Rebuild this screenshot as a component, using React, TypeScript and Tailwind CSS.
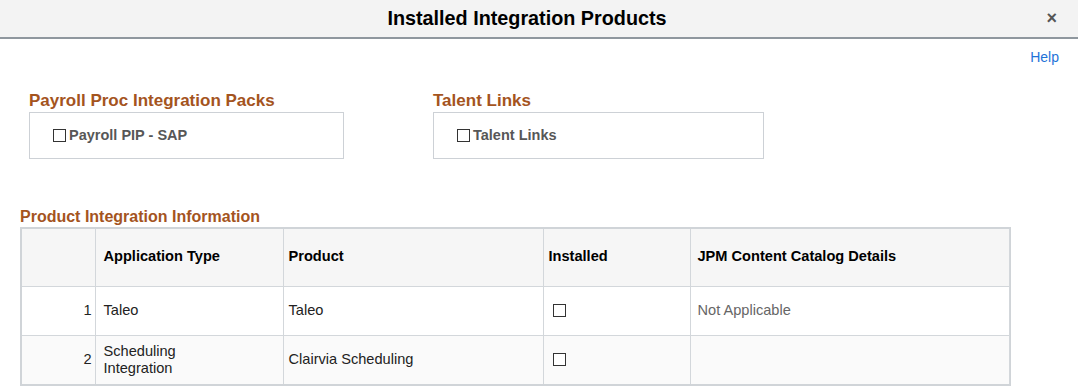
import React from "react";

const Box = () => (
  <span className="inline-block w-[13px] h-[13px] border border-[#333] bg-white shrink-0" />
);

const rows = [
  { n: 1, type: "Taleo", product: "Taleo", jpm: "Not Applicable" },
  { n: 2, type: "Scheduling Integration", product: "Clairvia Scheduling", jpm: "" },
];

export default function App() {
  return (
    <div className="w-[1078px] h-[390px] bg-white overflow-hidden font-['Liberation_Sans',Arial,sans-serif]">
      <div className="h-[39px] bg-[#f3f3f3] border-b-2 border-[#8f979e] flex items-center relative">
        <div className="w-full text-center text-[19.8px] font-bold text-black pt-[1px] pr-[24px]">
          Installed Integration Products
        </div>
        <span className="absolute right-[21px] top-[5px] text-[18px] font-bold text-[#555]">×</span>
      </div>

      <div className="flex justify-end pr-[19px] pt-[8px] h-[26px]">
        <span className="text-[14px] text-[#1f73d8]">Help</span>
      </div>

      <div className="flex pl-[29px] pt-[27px] gap-[89px]">
        <div>
          <div className="text-[17px] font-bold text-[#a4541e] leading-[18px] h-[20px]">
            Payroll Proc Integration Packs
          </div>
          <div className="w-[315px] h-[47px] border border-[#cdd1d6] flex items-center pl-[23px] gap-[3px]">
            <Box />
            <span className="text-[14.5px] font-bold text-[#575757]">Payroll PIP - SAP</span>
          </div>
        </div>
        <div>
          <div className="text-[17px] font-bold text-[#a4541e] leading-[18px] h-[20px]">
            Talent Links
          </div>
          <div className="w-[331px] h-[47px] border border-[#cdd1d6] flex items-center pl-[23px] gap-[3px]">
            <Box />
            <span className="text-[14.5px] font-bold text-[#575757]">Talent Links</span>
          </div>
        </div>
      </div>

      <div className="pl-[20px] pt-[49px]">
        <div className="text-[16px] font-bold text-[#a4541e] leading-[18px] h-[19px]">
          Product Integration Information
        </div>
        <div className="w-[991px] border-2 border-[#d0d4d8] border-r-[1px] pr-[1px]">
          <table className="w-[988px] border-collapse text-[14.6px] text-[#222]">
            <thead>
              <tr className="bg-[#f6f6f6] h-[57px] text-black">
                <th className="w-[73px] border-r border-[#d3d7db]" />
                <th className="w-[188px] text-left font-bold px-[8px] border-r border-[#d3d7db]">Application Type</th>
                <th className="w-[260px] text-left font-bold px-[5px] border-r border-[#d3d7db]">Product</th>
                <th className="w-[147px] text-left font-bold px-[5px] border-r border-[#d3d7db]">Installed</th>
                <th className="text-left font-bold px-[7px] border-r border-[#d3d7db]">JPM Content Catalog Details</th>
              </tr>
            </thead>
            <tbody>
              {rows.map((r, i) => (
                <tr
                  key={r.n}
                  className={`${i % 2 ? "bg-[#fafafa]" : "bg-white"} h-[49px] border-t border-[#d3d7db]`}
                >
                  <td className="text-right pr-[3px] border-r border-[#d3d7db]">{r.n}</td>
                  <td className="px-[8px] border-r border-[#d3d7db] leading-[17px]">
                    <div className="w-[90px]">{r.type}</div>
                  </td>
                  <td className="px-[5px] border-r border-[#d3d7db]">{r.product}</td>
                  <td className="px-[9px] border-r border-[#d3d7db]">
                    <div className="flex"><Box /></div>
                  </td>
                  <td className="px-[7px] text-[#666] border-r border-[#d3d7db]">{r.jpm}</td>
                </tr>
              ))}
            </tbody>
          </table>
        </div>
      </div>
    </div>
  );
}
